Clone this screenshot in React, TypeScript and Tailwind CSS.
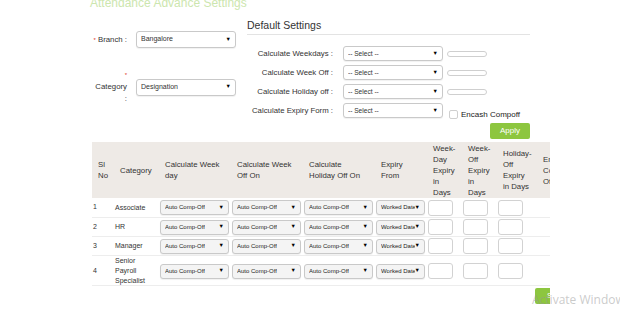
import React from "react"

const Sel = ({ label, className }: { label: string; className: string }) => (
  <div className={`flex items-center justify-between border border-[#c9c9c9] rounded-[3px] pl-[4px] pr-[4px] shadow-[0_1px_1px_rgba(0,0,0,0.06)] ${className}`}>
    <span className="whitespace-nowrap overflow-hidden">{label}</span>
    <span className="text-[5.5px] text-black leading-none">▼</span>
  </div>
)

const formRows = ["Calculate Weekdays :", "Calculate Week Off :", "Calculate Holiday off :"]

const heads = [
  "Sl No",
  "Category",
  "Calculate Week day",
  "Calculate Week Off On",
  "Calculate Holiday Off On",
  "Expiry From",
  "Week-Day Expiry in Days",
  "Week-Off Expiry in Days",
  "Holiday-Off Expiry in Days",
  "Encash Comp Off",
]

const rows = [
  { no: "1", cat: "Associate", h: "h-[20px]" },
  { no: "2", cat: "HR", h: "h-[19px]" },
  { no: "3", cat: "Manager", h: "h-[19px]" },
  { no: "4", cat: "Senior Payroll Specialist", h: "h-[30px]" },
]

const cols = "grid grid-cols-[22px_45px_72px_72px_72px_52px_35px_35px_40px_40px]"

const App = () => {
  return (
    <div className="w-[620px] h-[314px] overflow-hidden bg-white relative text-[#333] font-['Liberation_Sans',Arial,sans-serif]">
      {/* page title, mostly scrolled off */}
      <div className="flex h-[18px] pl-[90px]">
        <div className="-mt-[7px] text-[12px] leading-[20px] text-[#cce6ae]">
          Attendance Advance Settings
        </div>
      </div>

      <div className="flex">
        <div className="w-[155px] pl-[92px] -mr-[92px] shrink-0 box-content">
          <div className="flex items-center mt-[13px] h-[17px]">
            <div className="w-[35px] text-right text-[7.8px] whitespace-nowrap">
              <span className="text-[#e0352b] text-[6px] mr-[2px]">*</span>Branch :
            </div>
            <Sel label="Bangalore" className="ml-[9px] w-[100px] h-[17px] text-[7px] bg-white" />
          </div>
          <div className="flex items-center mt-[21px]">
            <div className="w-[35px] text-right text-[7.8px] leading-[12px]">
              <span className="text-[#e0352b] text-[6px]">*</span>
              <br />
              Category
              <br />:
            </div>
            <Sel label="Designation" className="ml-[9px] w-[100px] h-[17px] text-[7px] bg-white" />
          </div>
        </div>

        <div className="ml-[92px] w-[283px]">
          <div className="text-[10.5px] leading-[14px] pb-[2px] border-b border-[#e3e3e3] text-[#333]">
            Default Settings
          </div>
          <div className="flex flex-col gap-[4px] mt-[11px]">
            {formRows.map((l) => (
              <div key={l} className="flex items-center h-[15px]">
                <div className="w-[86px] text-right text-[7.8px] whitespace-nowrap">{l}</div>
                <Sel label="-- Select --" className="ml-[10px] w-[100px] h-[15px] text-[6.6px] bg-white" />
                <div className="ml-[4px] w-[40px] h-[6px] rounded-full border border-[#cfcfcf]" />
              </div>
            ))}
            <div className="flex items-center h-[15px]">
              <div className="w-[86px] text-right text-[7.8px] whitespace-nowrap">Calculate Expiry Form :</div>
              <Sel label="-- Select --" className="ml-[10px] w-[100px] h-[15px] text-[6.6px] bg-white" />
              <div className="flex items-end self-start mt-[7px] ml-[6px]">
                <div className="w-[9px] h-[9px] border border-[#cfcfcf] rounded-[2px]" />
                <span className="ml-[3px] text-[8px] leading-[9px] whitespace-nowrap text-[#222]">Encash Compoff</span>
              </div>
            </div>
          </div>
          <div className="flex justify-end mt-[5px]">
            <button className="w-[40px] h-[16px] bg-[#8dc63f] text-white text-[8px] rounded-[2px]">Apply</button>
          </div>
        </div>
      </div>

      <div className="ml-[92px] w-[458px] overflow-hidden mt-[3px]">
        <div className={`${cols} h-[56px] bg-[#eeeae6] w-max`}>
          {heads.map((h) => (
            <div key={h} className="flex items-center pl-[6px] pr-[6px] text-[7.8px] leading-[11px] text-[#333]">
              {h}
            </div>
          ))}
        </div>
        {rows.map((r) => (
          <div key={r.no} className={`${cols} ${r.h} w-max border-b border-[#ededed] text-[7px] text-[#333]`}>
            <div className="flex items-center pl-[1px]">{r.no}</div>
            <div className="flex items-center pl-[1px] pr-[4px] leading-[10px]">{r.cat}</div>
            {[0, 1, 2].map((i) => (
              <div key={i} className="flex items-center pl-[1px]">
                <Sel label="Auto Comp-Off" className="w-[69px] h-[15px] text-[6px] bg-[#f4f4f4] text-[#222]" />
              </div>
            ))}
            <div className="flex items-center pl-[1px]">
              <Sel label="Worked Date" className="w-[49px] h-[15px] text-[6px] bg-[#f4f4f4] text-[#222]" />
            </div>
            {[0, 1, 2].map((i) => (
              <div key={i} className="flex items-center pl-[1px]">
                <div className="w-[25px] h-[16px] border border-[#d2d2d2] rounded-[3px] bg-white" />
              </div>
            ))}
            <div />
          </div>
        ))}
      </div>

      <div className="flex ml-[92px] w-[458px] overflow-hidden mt-[2px] pl-[443px]">
        <button className="shrink-0 w-[50px] h-[16px] bg-[#8dc63f] text-white text-[8px] text-left pl-[12px] rounded-[2px]">Save</button>
      </div>

      {/* windows activation watermark */}
      <div className="absolute left-[532px] top-[292px] text-[12px] leading-[16px] whitespace-nowrap text-[rgba(150,150,150,0.5)] font-['Open_Sans',sans-serif]">
        Activate Windows
      </div>
    </div>
  )
}

export default App
